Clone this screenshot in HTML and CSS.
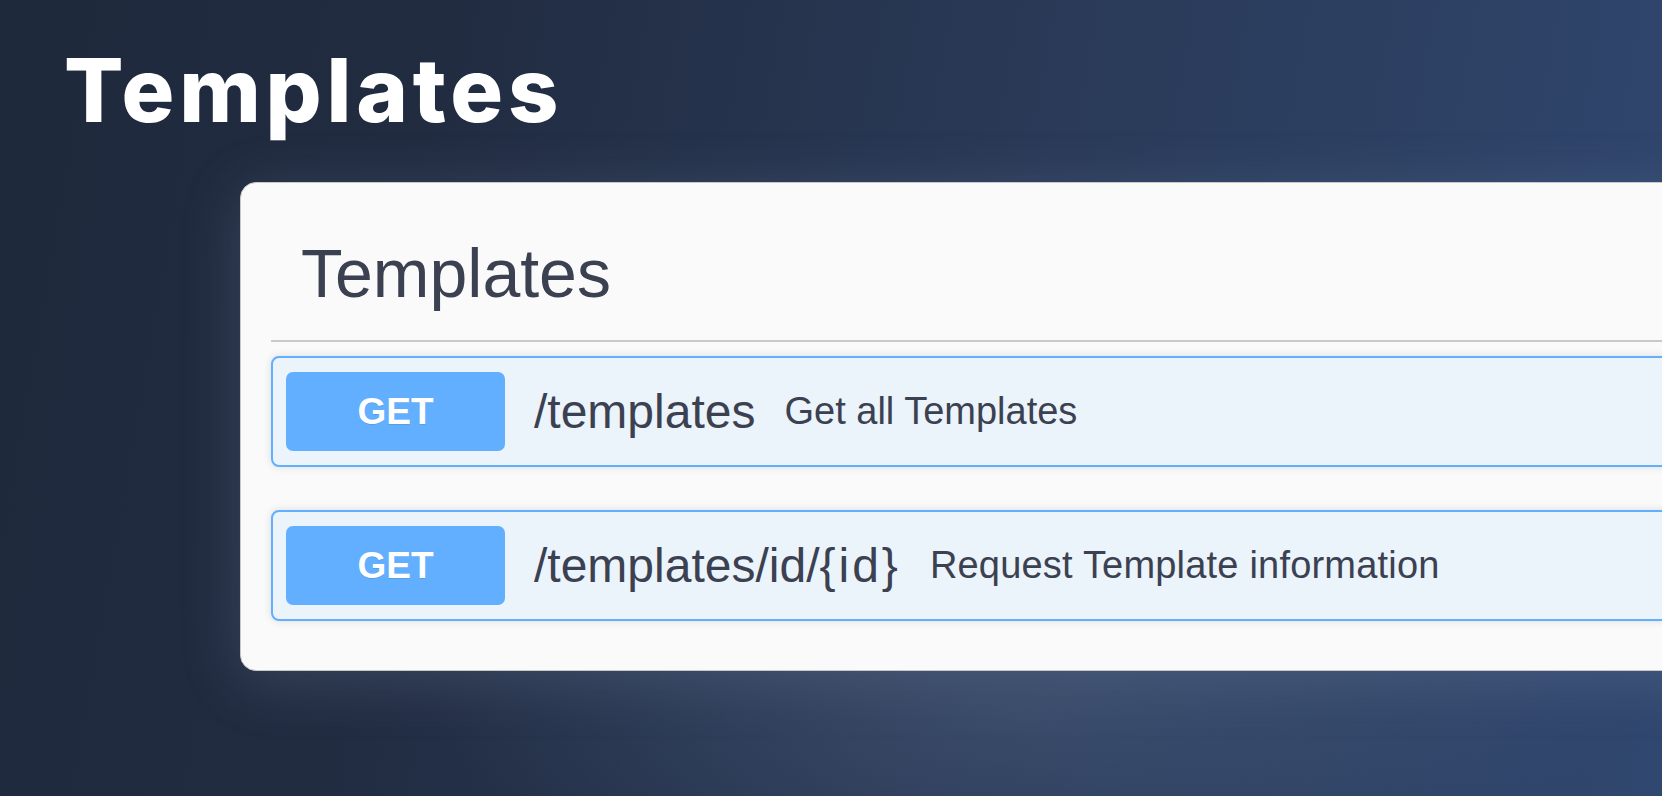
FILE: index.html
```html
<!DOCTYPE html>
<html lang="en">
<head>
<meta charset="utf-8">
<title>Templates</title>
<link rel="stylesheet" href="styles.css">
</head>
<body>
<div class="page">
  <h1 class="hero-title">Templates</h1>
  <section class="card">
    <div class="card-header">
      <h2 class="tag-title">Templates</h2>
    </div>
    <div class="ops">
      <div class="op">
        <span class="method">GET</span>
        <span class="path">/templates</span>
        <span class="desc">Get all Templates</span>
      </div>
      <div class="op">
        <span class="method">GET</span>
        <span class="path">/templates/id/<span class="param">{id}</span></span>
        <span class="desc">Request Template information</span>
      </div>
    </div>
  </section>
</div>
</body>
</html>
```

FILE: styles.css
```css
html, body {
  margin: 0;
  padding: 0;
}
body {
  width: 1662px;
  height: 796px;
  overflow: hidden;
  background:
    radial-gradient(ellipse 600px 170px at 62% 90%, rgba(80, 98, 128, 0.42), rgba(80, 98, 128, 0) 100%),
    linear-gradient(100deg, #1f293c 0%, #212c41 25%, #2a3a58 60%, #30476f 100%);
  font-family: "Liberation Sans", Arial, sans-serif;
}
.page {
  display: flex;
  flex-direction: column;
  padding: 46px 0 0 0;
}
.hero-title {
  margin: 0 0 0 64px;
  font-family: Inter, "Noto Sans", sans-serif;
  font-weight: 800;
  font-size: 88px;
  line-height: 88px;
  letter-spacing: 4.8px;
  color: #ffffff;
}
.card {
  margin: 48px 0 0 240px;
  width: 1500px;
  box-sizing: border-box;
  background: #fafafa;
  border: 1px solid #c8c8c8;
  border-radius: 16px;
  padding: 0 0 49px 30px;
  box-shadow: 0 10px 60px rgba(140, 160, 190, 0.22);
}
.card-header {
  padding: 57px 0 34px 30px;
  border-bottom: 2px solid #c9c9cc;
}
.tag-title {
  margin: 0;
  font-weight: 400;
  font-size: 68px;
  line-height: 66px;
  color: #3b4151;
}
.ops {
  display: flex;
  flex-direction: column;
  gap: 43px;
  padding-top: 14px;
}
.op {
  display: flex;
  align-items: center;
  padding: 14px 13px;
  background: #ebf3fb;
  border: 2px solid #61affe;
  border-radius: 8px;
  box-shadow: 0 0 8px rgba(0, 0, 0, 0.12);
}
.method {
  flex: none;
  width: 219px;
  height: 79px;
  display: flex;
  align-items: center;
  justify-content: center;
  background: #61affe;
  border-radius: 7px;
  color: #ffffff;
  font-weight: 700;
  font-size: 37px;
  text-shadow: 0 1px 0 rgba(0, 0, 0, 0.1);
}
.path {
  margin-left: 29px;
  font-size: 48px;
  color: #3b4151;
}
.param {
  letter-spacing: 3px;
}
.desc {
  margin-left: 29px;
  font-size: 38px;
  color: #3b4151;
}
.op + .op .desc {
  letter-spacing: 0.2px;
}
```
